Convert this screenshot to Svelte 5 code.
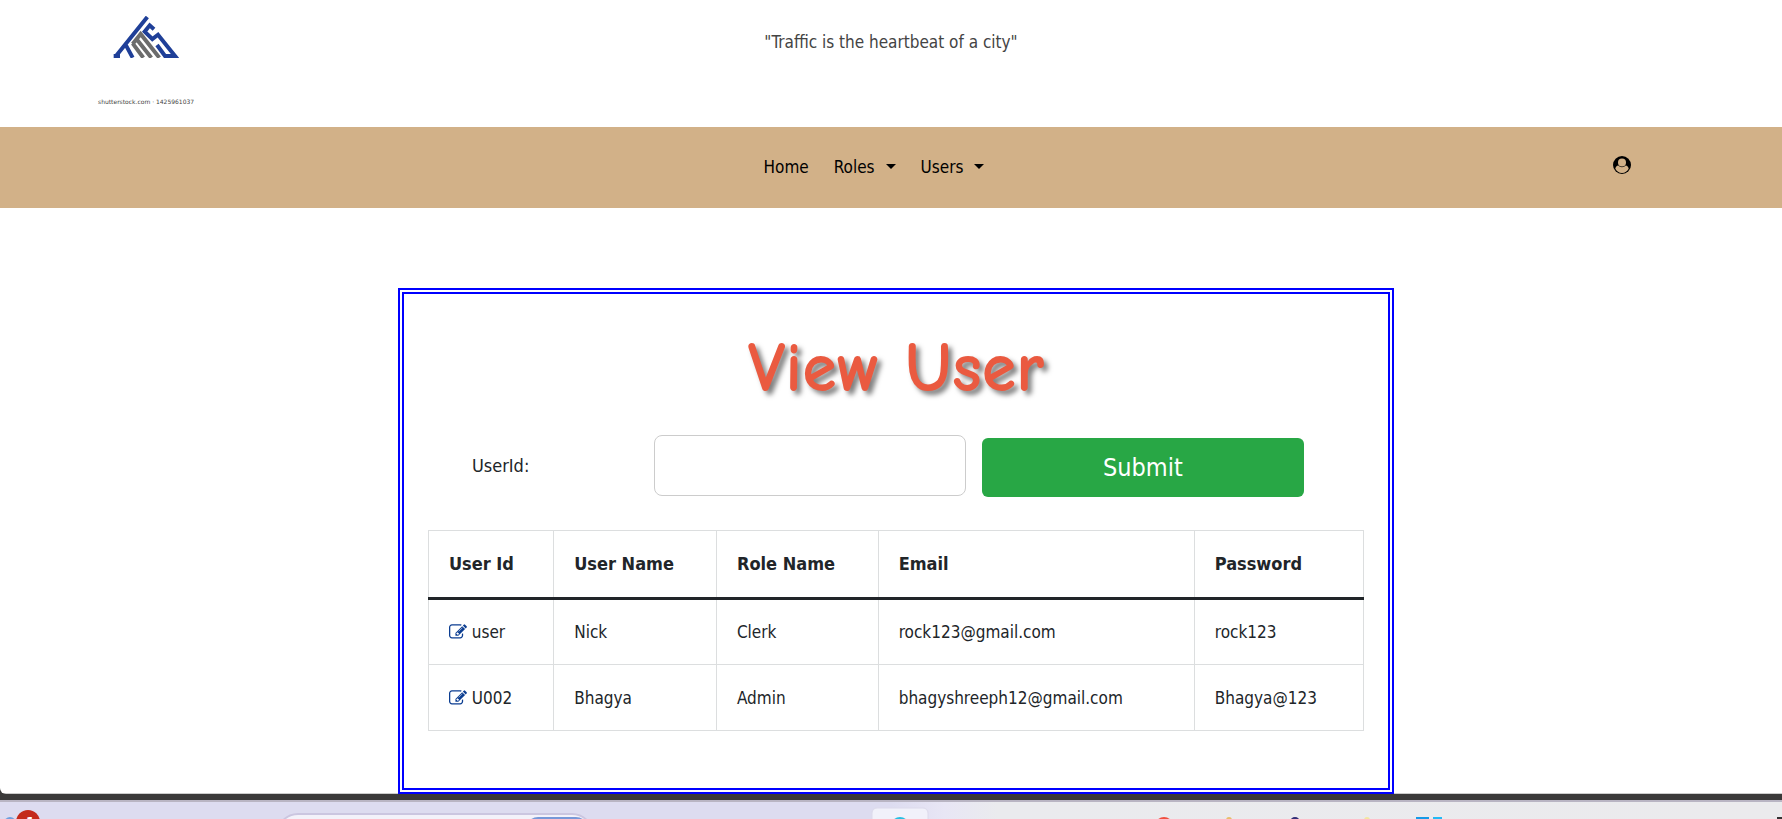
<script>
  const users = [
    { id: 'user', name: 'Nick', role: 'Clerk', email: 'rock123@gmail.com', password: 'rock123' },
    { id: 'U002', name: 'Bhagya', role: 'Admin', email: 'bhagyshreeph12@gmail.com', password: 'Bhagya@123' }
  ];
  let userId = $state('');
</script>

<div class="page">
  <header class="top">
    <a class="brand" href="#home" aria-label="TMS">
      <svg width="66" height="42" viewBox="0 0 198 126" aria-hidden="true">
        <g fill="none" stroke="#1f3f98" stroke-width="12">
          <path d="M103 3L9 120M2 120h19M39 88l20 37" />
          <path d="M123 40l-13-12-15 19 23 22 17-13 51 64h-30l-24-33" />
        </g>
        <path d="M59 82l32 43M59 84l24-30 56 71M71 70l44 55" fill="none" stroke="#6c6c6c" stroke-width="12" />
      </svg>
      <span class="stock">shutterstock.com · 1425961037</span>
    </a>
    <p class="motto">"Traffic is the heartbeat of a city"</p>
  </header>

  <nav class="bar">
    <div class="links">
      <a href="#home">Home</a>
      <button type="button">Roles <span class="caret"></span></button>
      <button type="button">Users <span class="caret"></span></button>
    </div>
    <a class="account" href="#account" aria-label="Account">
      <svg width="18" height="18" viewBox="0 0 18 18" aria-hidden="true">
        <circle cx="9" cy="9" r="9" />
        <circle cx="9" cy="6.5" r="4" fill="#d2b188" />
        <path d="M2.300 12.800c.3-2 1.400-3.200 3-3.300a5 5 0 0 0 7.400 0c1.600.1 2.700 1.300 3 3.300A7.900 7.900 0 0 1 9 17a7.900 7.900 0 0 1-6.700-4.200z" fill="#d2b188" />
      </svg>
    </a>
  </nav>

  <div class="content">
    <main class="panel">
      <h1>View User</h1>
      <form class="search" onsubmit={(e) => e.preventDefault()}>
        <label for="userid">UserId:</label>
        <input id="userid" type="text" bind:value={userId} />
        <button type="submit">Submit</button>
      </form>
      <table>
        <colgroup><col class="c1" /><col class="c2" /><col class="c3" /><col class="c4" /><col class="c5" /></colgroup>
        <thead>
          <tr><th>User Id</th><th>User Name</th><th>Role Name</th><th>Email</th><th>Password</th></tr>
        </thead>
        <tbody>
          {#each users as user}
            <tr>
              <td>
                <a class="edit" href="#edit" aria-label="Edit {user.id}">
                  <svg width="18" height="18" viewBox="0 0 1792 1792" aria-hidden="true"><path d="M888 1184l116-116-152-152-116 116v56h96v96h56zm440-720q-16-16-33 1l-350 350q-17 17-1 33t33-1l350-350q17-17 1-33zm80 594v190q0 119-84.500 203.500t-203.500 84.500h-832q-119 0-203.500-84.500t-84.500-203.500v-832q0-119 84.500-203.500t203.500-84.500h832q63 0 117 25 15 7 18 23 3 17-9 29l-49 49q-14 14-32 8-23-6-45-6h-832q-66 0-113 47t-47 113v832q0 66 47 113t113 47h832q66 0 113-47t47-113v-126q0-13 9-22l64-64q15-15 35-7t20 29zm-96-738l288 288-672 672h-288v-288zm444 132l-92 92-288-288 92-92q28-28 68-28t68 28l152 152q28 28 28 68t-28 68z" /></svg>
                </a>
                {user.id}
              </td>
              <td>{user.name}</td>
              <td>{user.role}</td>
              <td>{user.email}</td>
              <td>{user.password}</td>
            </tr>
          {/each}
        </tbody>
      </table>
    </main>
  </div>

  <footer class="taskbar">
    <svg width="100%" height="17" aria-hidden="true">
      <circle cx="10" cy="21" r="6" fill="#6f9fdd" />
      <circle cx="28" cy="20" r="12" fill="#c42b1c" />
      <text x="26" y="25" fill="#fff" font-size="14" font-weight="700">1</text>
      <rect x="277" y="12" width="316" height="42" rx="21" fill="#f3f2fa" stroke="#cbc6e0" stroke-width="2" />
      <rect x="526" y="15" width="62" height="30" rx="12" fill="#7898d8" />
      <rect x="872" y="6" width="56" height="54" rx="5" fill="#f1f1fa" stroke="#dcdaeb" />
      <circle cx="900" cy="24" r="9" fill="#26bfe2" />
      <circle cx="1164" cy="24" r="9" fill="#f05040" />
      <circle cx="1229" cy="18" r="3" fill="#e9bd6a" />
      <circle cx="1295" cy="20" r="5" fill="#332f78" />
      <circle cx="1367" cy="18" r="3" fill="#f3e6a0" />
      <path d="M1416 15h13v3h-13z" fill="#169be8" />
      <path d="M1433 15h9v3h-9z" fill="#23baf5" />
      <path d="M1777 15h6v3h-6z" fill="#333" />
    </svg>
  </footer>
</div>

<style>
  :global(body) { margin: 0; background: #fff; }
  .page {
    min-height: 100vh;
    display: flex;
    flex-direction: column;
    overflow: hidden;
    background: #3a3939;
    color: #212529;
    font: 17px/26px Tahoma, "DejaVu Sans Condensed", "Noto Sans", sans-serif;
  }
  .page, .page * { box-sizing: border-box; }
  a { color: inherit; text-decoration: none; }
  .top {
    display: grid;
    grid-template-columns: 1fr auto 1fr;
    height: 127px;
    padding: 16px 98px 0;
    background: #fff;
  }
  .brand { display: flex; flex-direction: column; align-items: center; justify-self: start; gap: 36px; }
  .stock { font: 6px/16px "DejaVu Sans", sans-serif; color: #444; white-space: nowrap; }
  .motto { margin: 13px 0 0; color: #444; }
  .bar {
    display: grid;
    grid-template-columns: 1fr auto 1fr;
    align-items: center;
    height: 81px;
    padding: 0 151px 2px 117px;
    background: #d2b188;
    color: #000;
  }
  .links { grid-column: 2; display: flex; gap: 25px; }
  .links button { display: flex; align-items: center; gap: 11px; border: 0; padding: 0; background: none; color: inherit; font: inherit; }
  .caret { border: 5px solid transparent; border-top-color: #000; border-bottom: 0; }
  .account { justify-self: end; display: flex; padding-bottom: 4px; }
  .content {
    padding-top: 80px;
    background: linear-gradient(#ccc, #ccc) bottom / 100% 1px no-repeat #fff;
    border-bottom-left-radius: 6px;
  }
  .panel {
    width: 55.9%;
    min-height: 506px;
    margin-left: 22.33%;
    border: 6px double #00f;
    padding: 24px;
    background: #fff;
  }
  h1 {
    margin: 11px 0 0;
    color: #ea5a40;
    text-align: center;
    font: 700 70px/80px "Comic Sans MS", "Comic Neue", cursive;
    text-shadow: 4px 4px 5px rgba(0, 0, 0, 0.5);
  }
  .search {
    display: grid;
    grid-template-columns: 166px 312px 322px;
    column-gap: 16px;
    align-items: center;
    height: 62px;
    margin: 26px 0 33px;
    padding-left: 44px;
  }
  .search label { font-size: 18px; }
  .search input { align-self: start; height: 61px; border: 1px solid #ccc; border-radius: 8px; padding: 0 16px; font: inherit; background: #fff; }
  .search button { align-self: end; height: 59px; border: 0; border-radius: 6px; background: #28a745; color: #fff; font: inherit; font-size: 25px; }
  table { width: 100%; border-collapse: collapse; table-layout: fixed; }
  th, td { height: 66px; padding: 0 20px; border: 1px solid #dcdedf; text-align: left; white-space: nowrap; }
  thead th { height: 68px; border-bottom: 3px solid #212529; font-size: 18px; font-weight: 700; }
  .edit { color: #0b3d91; }
  .edit svg { fill: currentColor; vertical-align: -3px; }
  .c1 { width: 13.4%; } .c2 { width: 17.4%; } .c3 { width: 17.3%; } .c4 { width: 33.8%; } .c5 { width: 18.1%; }
  .taskbar {
    flex: 1;
    border-top: 6px solid #3a3939;
    background: linear-gradient(#b9b5c3, #b9b5c3) top / 100% 2px no-repeat, linear-gradient(90deg, #dddcf0 0, #dddcf0 50%, #e8e6f5 53%, #eaebee 56%, #ebebed 100%);
    padding-top: 2px;
    height: 25px;
    overflow: hidden;
  }
  .taskbar svg { display: block; }
</style>
